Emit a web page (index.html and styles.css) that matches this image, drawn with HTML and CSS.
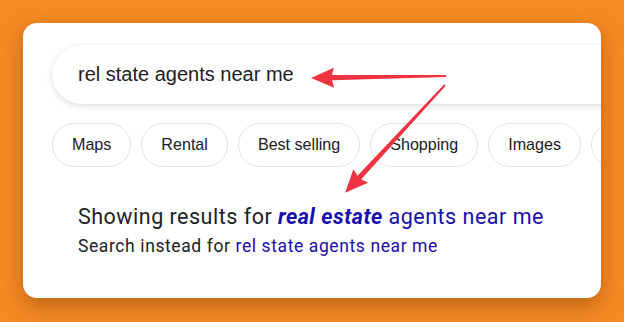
FILE: index.html
```html
<!DOCTYPE html>
<html>
<head>
<meta charset="utf-8">
<link rel="stylesheet" href="styles.css">
</head>
<body>
<div class="card">
  <div class="searchbar">rel state agents near me</div>
  <div class="chips">
    <span class="chip">Maps</span>
    <span class="chip">Rental</span>
    <span class="chip">Best selling</span>
    <span class="chip">Shopping</span>
    <span class="chip">Images</span>
    <span class="chip chip-empty"></span>
  </div>
  <div class="showing">Showing results for <a class="link"><b><i>real estate</i></b> agents near me</a></div>
  <div class="instead">Search instead for <a class="link">rel state agents near me</a></div>
</div>
<svg class="arrows" width="624" height="322" viewBox="0 0 624 322">
  <g transform="translate(446 76) rotate(179.15)">
    <polygon points="0,-1 114,-2.6 112,-10 135,0 112,10 114,2.6 0,1" fill="#f03340"/>
  </g>
  <g transform="translate(445 85) rotate(132.8)">
    <polygon points="0,-1 126,-2.6 124,-10 147,0 124,10 126,2.6 0,1" fill="#f03340"/>
  </g>
</svg>
</body>
</html>
```
FILE: styles.css
```css
html, body {
  margin: 0;
  padding: 0;
}
body {
  background: #f68a24;
  width: 624px;
  height: 322px;
  position: relative;
  overflow: hidden;
  padding: 23px 0 0 23px;
  box-sizing: border-box;
}
.card {
  width: 578px;
  height: 275px;
  background: #fff;
  border-radius: 14px;
  box-shadow: 0 8px 22px rgba(80, 30, 0, 0.35);
  overflow: hidden;
  padding: 22px 0 0 29px;
  box-sizing: border-box;
}
.searchbar {
  width: 600px;
  height: 59px;
  border-radius: 30px 0 0 30px;
  box-shadow: 0 2px 6px rgba(32, 33, 36, 0.14), 0 0 1px rgba(32, 33, 36, 0.1);
  box-sizing: border-box;
  padding-left: 26px;
  display: flex;
  align-items: center;
  font-family: "Liberation Sans", Arial, sans-serif;
  font-size: 20px;
  color: #202124;
}
.chips {
  display: flex;
  gap: 10px;
  margin-top: 19px;
  width: 640px;
}
.chip {
  flex: none;
  height: 44px;
  box-sizing: border-box;
  border: 1px solid #e3e3e3;
  border-radius: 22px;
  padding: 0 19px 2px;
  display: flex;
  align-items: center;
  font-family: "Liberation Sans", Arial, sans-serif;
  font-size: 16.1px;
  color: #202124;
}
.chip-empty {
  width: 80px;
}
.showing {
  margin-top: 37px;
  margin-left: 26px;
  font-family: Roboto, Arial, sans-serif;
  font-size: 21.5px;
  letter-spacing: 0.5px;
  line-height: 26px;
  color: #202124;
}
.instead {
  margin-top: 5px;
  margin-left: 26px;
  font-family: Roboto, Arial, sans-serif;
  font-size: 17.5px;
  letter-spacing: 0.6px;
  line-height: 22px;
  color: #202124;
}
.link {
  color: #1a0dab;
}
.arrows {
  position: absolute;
  left: 0;
  top: 0;
  pointer-events: none;
}
```
